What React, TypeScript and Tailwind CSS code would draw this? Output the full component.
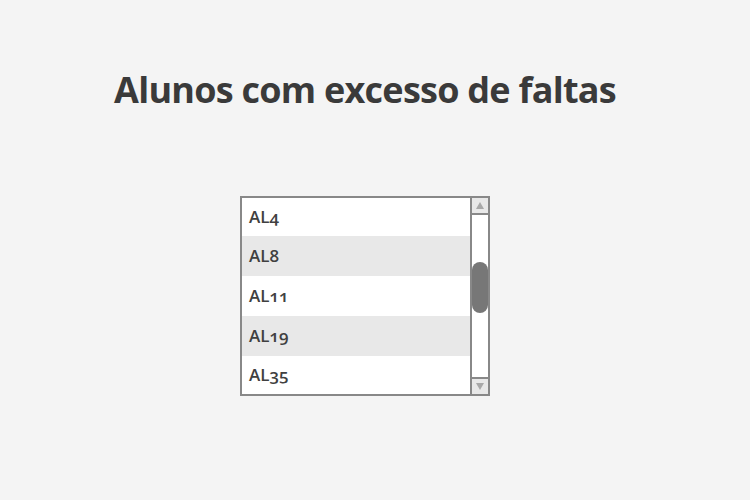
import React from "react";

const items = [
  { label: "AL4", h: "h-[38px]", bg: "bg-white" },
  { label: "AL8", h: "h-[40px]", bg: "bg-[#e8e8e8]" },
  { label: "AL11", h: "h-[40px]", bg: "bg-white" },
  { label: "AL19", h: "h-[40px]", bg: "bg-[#e8e8e8]" },
  { label: "AL35", h: "h-[38px]", bg: "bg-white" },
];

export default function App() {
  return (
    <div className="w-[750px] h-[500px] bg-[#f4f4f4] overflow-hidden [font-family:'Open_Sans','Noto_Sans',sans-serif]">
      <div className="w-[730px] flex flex-col items-center pt-[72px]">
        <h1 className="text-[36px] leading-none font-bold text-[#3a3a3a] tracking-[-0.75px]">
          Alunos com excesso de faltas
        </h1>
        <div className="mt-[88px] w-[250px] h-[200px] border-2 border-[#888888] bg-white flex">
          <div className="w-[228px] flex flex-col">
            {items.map((it) => (
              <div
                key={it.label}
                className={`${it.h} ${it.bg} flex items-center pl-[7px] text-[17px] font-semibold text-[#404040] oldstyle-nums`}
              >
                {it.label}
              </div>
            ))}
          </div>
          <div className="w-[18px] border-l-2 border-[#888888] flex flex-col">
            <div className="h-[17px] bg-[#e8e8e8] border-b-2 border-[#888888] flex items-center justify-center">
              <svg width="8" height="7" viewBox="0 0 8 7">
                <polygon points="4,0 8,7 0,7" fill="#a8a8a8" />
              </svg>
            </div>
            <div className="flex-1 flex flex-col bg-white">
              <div className="h-[47px]" />
              <div className="h-[51px] rounded-full bg-[#777777]" />
            </div>
            <div className="h-[17px] bg-[#e8e8e8] border-t-2 border-[#888888] flex items-center justify-center">
              <svg width="8" height="7" viewBox="0 0 8 7">
                <polygon points="0,0 8,0 4,7" fill="#a8a8a8" />
              </svg>
            </div>
          </div>
        </div>
      </div>
    </div>
  );
}
